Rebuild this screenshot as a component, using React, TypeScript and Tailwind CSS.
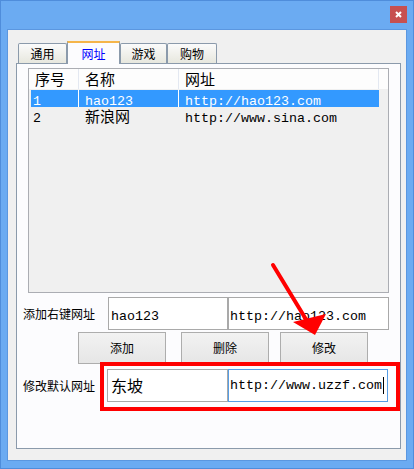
import React from "react";

const cjk = "[font-family:'Noto_Sans_CJK_SC',sans-serif]";

function M({ children }: { children: React.ReactNode }) {
  return <span className="[font-family:'Liberation_Mono',monospace] text-[13.33px]">{children}</span>;
}

function Tab({ label, active, w }: { label: string; active?: boolean; w: string }) {
  if (active) {
    return (
      <div
        className={`relative z-10 -mb-[1px] flex h-[23px] ${w} items-center justify-center border-x border-t-2 border-x-[#8b9aab] border-t-[#f5b54a] bg-[#fcfcfe] text-[12px] text-[#0000ff]`}
      >
        {label}
      </div>
    );
  }
  return (
    <div
      className={`flex h-[20px] ${w} items-center justify-center rounded-t-[2px] border border-b-0 border-[#8b9aab] bg-gradient-to-b from-[#fbfbfb] to-[#e7e7de] text-[12px] text-black`}
    >
      {label}
    </div>
  );
}

function Btn({ label }: { label: string }) {
  return (
    <div className="flex h-[32px] w-[88px] items-center justify-center border border-[#adadad] bg-gradient-to-b from-[#f2f2f2] to-[#e6e6e6] text-[12px] text-black">
      {label}
    </div>
  );
}

export default function App() {
  return (
    <div className={`relative h-[469px] w-[414px] overflow-hidden border border-[#4f8ddb] bg-[#6babf2] px-[6px] ${cjk}`}>
      {/* title bar */}
      <div className="flex h-[28px] items-start justify-end pt-[5px]">
        <div className="flex h-[17px] w-[17px] items-center justify-center bg-[#c75050]">
          <svg width="7" height="7" viewBox="0 0 7 7">
            <path d="M1 1 L6 6 M6 1 L1 6" stroke="white" strokeWidth="2" />
          </svg>
        </div>
      </div>

      {/* client */}
      <div className="h-[432px] w-[400px] border border-[#5b97e0] bg-[#f0f0f0] pl-[8px] pt-[11px]">
        {/* tabs */}
        <div className="flex h-[22px] items-end pl-[2px]">
          <Tab label="通用" w="w-[49px]" />
          <Tab label="网址" w="w-[53px]" active />
          <Tab label="游戏" w="w-[47px]" />
          <Tab label="购物" w="w-[50px]" />
        </div>

        {/* panel */}
        <div className="h-[386px] w-[385px] border border-[#8b9aab] bg-[#fcfcfe]">
          {/* list view */}
          <div className="ml-[11px] mt-[4px] h-[225px] w-[361px] border border-[#abadb3] bg-[#f0f0f0] text-[15px] text-black">
            <div className="flex h-[20px] bg-[#fdfdfd] leading-[20px]">
              <div className="w-[50px] border-r border-[#e3e8f1] pl-[6px]">序号</div>
              <div className="w-[100px] border-r border-[#e3e8f1] pl-[6px]">名称</div>
              <div className="w-[200px] border-r border-[#e3e8f1] pl-[6px]">网址</div>
              <div className="flex-1" />
            </div>
            <div className="ml-[2px] mt-[1px] w-[348px] leading-[17px]">
              <div className="flex h-[17px] bg-[#3399ff] text-white">
                <div className="w-[47px] pl-[2px]"><M>1</M></div>
                <div className="w-[100px] border-l border-white pl-[6px]"><M>hao123</M></div>
                <div className="w-[201px] border-l border-white pl-[6px]"><M>http://hao123.com</M></div>
              </div>
              <div className="flex h-[17px]">
                <div className="w-[47px] pl-[2px]"><M>2</M></div>
                <div className="w-[100px] border-l border-transparent pl-[6px]">新浪网</div>
                <div className="w-[201px] border-l border-transparent pl-[6px]"><M>http://www.sina.com</M></div>
              </div>
            </div>
          </div>

          {/* add row */}
          <div className="mt-[4px] flex items-center pl-[6px]">
            <div className="w-[85px] text-[12px] text-black">添加右键网址</div>
            <div className="h-[33px] w-[120px] border border-[#a9a9a9] bg-white pl-[2px] leading-[31px] text-black"><M>hao123</M></div>
            <div className="h-[33px] w-[161px] border border-[#a9a9a9] bg-white pl-[1px] leading-[31px] text-black"><M>http://hao123.com</M></div>
          </div>

          {/* buttons */}
          <div className="mt-[2px] flex pl-[61px]">
            <Btn label="添加" />
            <div className="ml-[15px]"><Btn label="删除" /></div>
            <div className="ml-[11px]"><Btn label="修改" /></div>
          </div>

          {/* default row */}
          <div className="mt-[5px] flex items-center pl-[6px]">
            <div className="w-[84px] text-[12px] text-black">修改默认网址</div>
            <div className="h-[33px] w-[121px] border border-[#a9a9a9] bg-white pl-[3px] text-[16px] leading-[31px] text-black">东坡</div>
            <div className="flex h-[33px] w-[160px] items-center border border-[#569de5] bg-white pl-[1px] text-black">
              <M>http://www.uzzf.com</M>
              <span className="ml-[1px] h-[17px] w-[1px] bg-black" />
            </div>
          </div>
        </div>
      </div>

      {/* annotation: red box */}
      <div className="pointer-events-none absolute left-[99px] top-[361px] h-[49px] w-[300px] border-4 border-[#ff0000]" />

      {/* annotation: arrow */}
      <svg className="pointer-events-none absolute left-0 top-0" width="414" height="469" viewBox="0 0 414 469">
        <line x1="272" y1="264" x2="306" y2="320" stroke="#ff0000" strokeWidth="4" strokeLinecap="round" />
        <polygon points="314,334 292,321 325,313" fill="#ff0000" />
      </svg>
    </div>
  );
}
